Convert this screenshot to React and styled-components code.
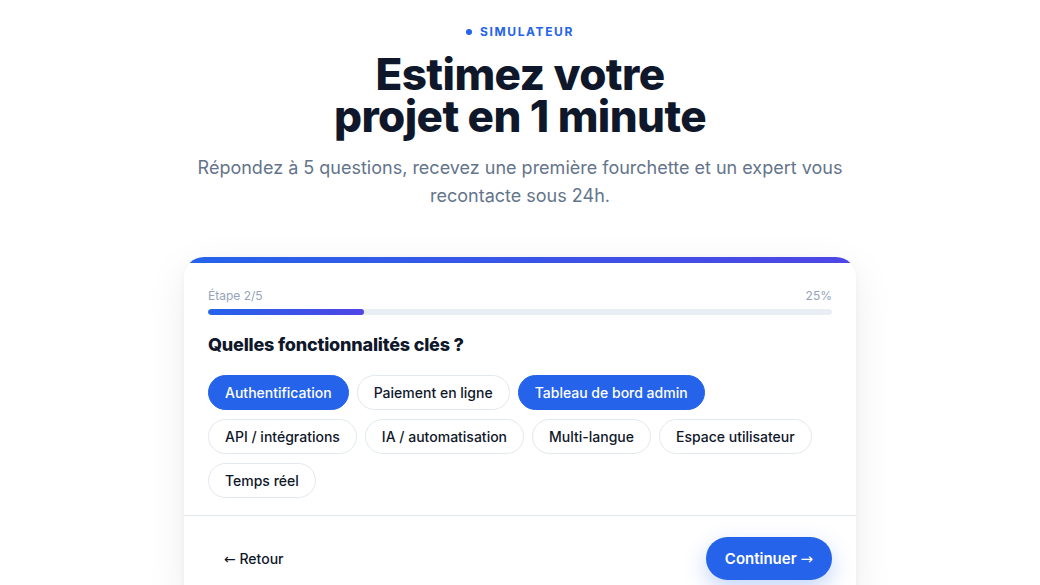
import React, { useState } from "react";
import styled, { createGlobalStyle } from "styled-components";

const GlobalStyle = createGlobalStyle`
  body {
    margin: 0;
    background: #ffffff;
    font-family: Inter, "Noto Sans", sans-serif;
    color: #0f172a;
  }
`;

const Page = styled.main`
  display: flex;
  flex-direction: column;
  align-items: center;
  padding-top: 23px;
  height: 585px;
  overflow: hidden;
  box-sizing: border-box;
`;

const Eyebrow = styled.div`
  display: flex;
  align-items: center;
  gap: 8px;
  font-size: 12px;
  line-height: 18px;
  font-weight: 700;
  letter-spacing: 1.6px;
  color: #2563eb;

  &::before {
    content: "";
    width: 6px;
    height: 6px;
    border-radius: 50%;
    background: #2563eb;
  }
`;

const Title = styled.h1`
  margin: 12px 0 0;
  font-size: 44px;
  line-height: 42px;
  font-weight: 800;
  letter-spacing: -0.6px;
  text-align: center;
  color: #0f172a;
`;

const Lead = styled.p`
  margin: 17px 0 0;
  max-width: 680px;
  font-size: 18px;
  line-height: 28px;
  text-align: center;
  color: #64748b;
`;

const Card = styled.section`
  margin-top: 47px;
  width: 672px;
  flex-shrink: 0;
  background: #fff;
  border-radius: 20px;
  overflow: hidden;
  box-shadow: 0 12px 40px rgba(15, 23, 42, 0.08), 0 2px 6px rgba(15, 23, 42, 0.04);
`;

const TopBar = styled.div`
  height: 6px;
  background: linear-gradient(90deg, #2563eb, #4f46e5);
`;

const Body = styled.div`
  padding: 25px 24px 17px;
`;

const StepRow = styled.div`
  display: flex;
  justify-content: space-between;
  font-size: 12px;
  line-height: 16px;
  color: #94a3b8;
`;

const Track = styled.div`
  margin-top: 5px;
  height: 6px;
  border-radius: 3px;
  background: #e9eef5;
  overflow: hidden;
`;

const Fill = styled.div`
  height: 100%;
  border-radius: 3px;
  background: linear-gradient(90deg, #2563eb, #4f46e5);
`;

const Question = styled.h2`
  margin: 18px 0 0;
  font-size: 18px;
  line-height: 24px;
  font-weight: 800;
  letter-spacing: -0.2px;
`;

const Chips = styled.div`
  margin-top: 18px;
  display: flex;
  flex-wrap: wrap;
  gap: 9px 8px;
`;

const Chip = styled.button`
  height: 35px;
  padding: 0 16px;
  border-radius: 999px;
  font-family: inherit;
  font-size: 14px;
  font-weight: 500;
  cursor: pointer;
  border: 1px solid ${(p) => (p.$active ? "#2563eb" : "#e2e8f0")};
  background: ${(p) => (p.$active ? "#2563eb" : "#fff")};
  color: ${(p) => (p.$active ? "#fff" : "#0f172a")};
`;

const Footer = styled.div`
  display: flex;
  justify-content: space-between;
  align-items: center;
  border-top: 1px solid #e2e8f0;
  padding: 21px 24px 24px;
`;

const BackButton = styled.button`
  border: none;
  background: none;
  padding: 0 16px;
  font-family: inherit;
  font-size: 14px;
  font-weight: 500;
  color: #0f172a;
  cursor: pointer;
`;

const Arrow = styled.span`
  font-family: "DejaVu Sans", sans-serif;
  font-weight: 400;
`;

const NextButton = styled.button`
  height: 43px;
  padding: 0 19px;
  border: none;
  border-radius: 999px;
  background: #2563eb;
  color: #fff;
  font-family: inherit;
  font-size: 15px;
  font-weight: 600;
  cursor: pointer;
  box-shadow: 0 8px 22px rgba(37, 99, 235, 0.28);
`;

const options = [
  "Authentification",
  "Paiement en ligne",
  "Tableau de bord admin",
  "API / intégrations",
  "IA / automatisation",
  "Multi-langue",
  "Espace utilisateur",
  "Temps réel",
];

export default function App() {
  const [picked, setPicked] = useState(["Authentification", "Tableau de bord admin"]);
  const progress = 25;

  const toggle = (o) =>
    setPicked((prev) => (prev.includes(o) ? prev.filter((x) => x !== o) : [...prev, o]));

  return (
    <>
      <GlobalStyle />
      <Page>
        <Eyebrow>SIMULATEUR</Eyebrow>
        <Title>
          Estimez votre
          <br />
          projet en 1 minute
        </Title>
        <Lead>
          Répondez à 5 questions, recevez une première fourchette et un expert vous recontacte sous
          24h.
        </Lead>
        <Card>
          <TopBar />
          <Body>
            <StepRow>
              <span>Étape 2/5</span>
              <span>{progress}%</span>
            </StepRow>
            <Track>
              <Fill style={{ width: `${progress}%` }} />
            </Track>
            <Question>Quelles fonctionnalités clés ?</Question>
            <Chips>
              {options.map((o) => (
                <Chip key={o} $active={picked.includes(o)} onClick={() => toggle(o)}>
                  {o}
                </Chip>
              ))}
            </Chips>
          </Body>
          <Footer>
            <BackButton>
              <Arrow>←</Arrow> Retour
            </BackButton>
            <NextButton>
              Continuer <Arrow>→</Arrow>
            </NextButton>
          </Footer>
        </Card>
      </Page>
    </>
  );
}
